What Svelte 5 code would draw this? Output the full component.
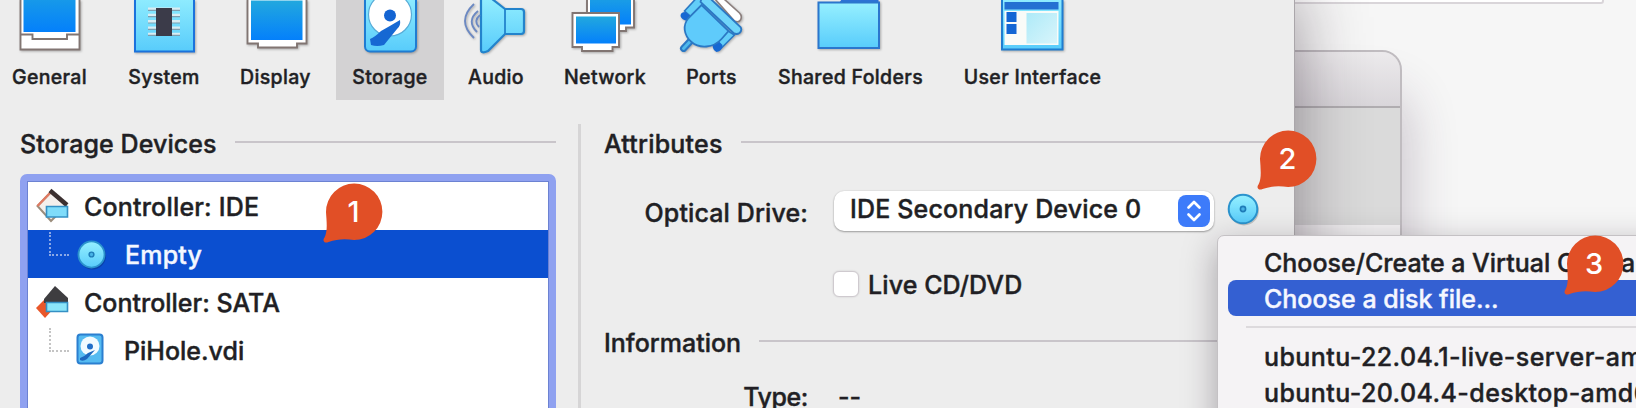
<script>
  const tools = [
    { id: 'general', label: 'General', cx: 49.5, w: 99 },
    { id: 'system', label: 'System', cx: 164, w: 130 },
    { id: 'display', label: 'Display', cx: 275.5, w: 93 },
    { id: 'storage', label: 'Storage', cx: 390, w: 136 },
    { id: 'audio', label: 'Audio', cx: 496, w: 76 },
    { id: 'network', label: 'Network', cx: 605, w: 142 },
    { id: 'ports', label: 'Ports', cx: 711.5, w: 71 },
    { id: 'folders', label: 'Shared Folders', cx: 850.5, w: 207 },
    { id: 'ui', label: 'User Interface', cx: 1032.5, w: 157 }
  ];
  const badges = [
    { n: 1, x: 354, y: 211.5 },
    { n: 2, x: 1288, y: 158.5 },
    { n: 3, x: 1594.5, y: 263.5 }
  ];
</script>

{#snippet disc()}
  <svg class="disc" viewBox="-17 -17 34 34">
    <circle cx="1" cy="1.5" r="15" fill="#000" opacity=".18" />
    <circle r="14.3" fill="url(#aqua)" stroke="#2b93cd" stroke-width="2" />
    <circle r="2.6" fill="#48b4e6" stroke="#1e7cb8" stroke-width="1.6" />
  </svg>
{/snippet}

<svg class="defs" width="0" height="0">
  <defs>
    <linearGradient id="screen" x1="0" y1="0" x2="0" y2="1">
      <stop offset="0" stop-color="#22a8de" /><stop offset="1" stop-color="#0480fb" />
    </linearGradient>
    <linearGradient id="aqua" x1="0" y1="0" x2="0" y2="1">
      <stop offset="0" stop-color="#96f0ff" /><stop offset="1" stop-color="#58ccfb" />
    </linearGradient>
    <linearGradient id="pale" x1="0" y1="0" x2="1" y2="1">
      <stop offset="0" stop-color="#aeeaf8" /><stop offset="1" stop-color="#d8f5fb" />
    </linearGradient>
  </defs>
</svg>

<div class="desktop">
  <div class="sheet"></div>
  <div class="behind">
    <div class="behind-title"></div>
    <div class="behind-body"></div>
    <div class="behind-foot"></div>
  </div>

  <main class="window">
    <nav class="toolbar">
      {#each tools as t}
        <div class="slot" style="width:{t.w}px">
          <div class="tool" class:active={t.id === 'storage'}>
            <svg class="ticon" viewBox="{t.cx - 36} 0 72 60">
              {#if t.id === 'general'}
                <path d="M21 -5H80V49.5H21Z" fill="#fff" stroke="#817572" stroke-width="1.9" />
                <path d="M24 -20H76V32H24Z" fill="url(#screen)" />
                <path d="M21 34.5H33V39H67.5V34.5H80" fill="none" stroke="#817572" stroke-width="1.9" />
              {:else if t.id === 'system'}
                <path d="M135 -8H194V51.5H135Z" fill="url(#aqua)" stroke="#1b72dc" stroke-width="2" />
                <path d="M148 9H180M148 15.3H180M148 21.6H180M148 27.9H180M148 34.2H180" stroke="#d9edf3" stroke-width="3" />
                <path d="M148 10.4H180M148 16.7H180M148 23H180M148 29.3H180M148 35.3H180" stroke="#7d9fb0" stroke-width="1.2" />
                <path d="M156 8H172V36H156Z" fill="#3b3b49" />
              {:else if t.id === 'display'}
                <path d="M247 -5H306V43.5H296.5V47.5H257.5V43.5H247Z" fill="#fff" stroke="#817572" stroke-width="1.9" />
                <path d="M250.5 0.5H302V40H250.5Z" fill="url(#screen)" />
              {:else if t.id === 'storage'}
                <rect x="365" y="-10" width="51" height="61.5" rx="5" fill="url(#aqua)" stroke="#1f7cd2" stroke-width="2" />
                <circle cx="390" cy="14.5" r="21.5" fill="#fff" stroke="#58acd8" stroke-width="1.2" />
                <circle cx="390" cy="15.5" r="6" fill="#1464d2" />
                <path d="M370 39Q375 37 381 31Q390 26 400 20Q401 26 397 29L384 45Q377 47 371 45Z" fill="#1668d3" />
              {:else if t.id === 'audio'}
                <path d="M481 -5H487L505 9H521Q524 9 524 12V31Q524 34 521 34H505L488 51Q481 54 481 50Z" fill="url(#aqua)" stroke="#2383cc" stroke-width="2.2" />
                <path d="M505 9V34" stroke="#2383cc" stroke-width="1.8" />
                <path d="M474 4Q456 21 474 38M478 11Q466 21 477 32M480 15Q473 21 479 27" fill="none" stroke="#6c89c2" stroke-width="1.9" />
              {:else if t.id === 'network'}
                <path d="M587 -5H634V27.5H626V31H606V27.5H587Z" fill="#fff" stroke="#817572" stroke-width="1.9" />
                <path d="M590 -10H631V24.5H590Z" fill="url(#screen)" />
                <path d="M572.5 13H619V47H612.5V51H582V47H572.5Z" fill="#fff" stroke="#817572" stroke-width="1.9" />
                <path d="M576 16.5H616V43.5H576Z" fill="url(#screen)" />
              {:else if t.id === 'ports'}
                <path d="M710 -6H718L739 13Q742 16 740 20Q738 23 734 21Z" fill="#fff" stroke="#8b7e7c" stroke-width="1.6" />
                <path d="M684 11L697 -3L706 3L692 18ZM714 42L726 30L734 35L721 48Z" fill="#62cdf8" stroke="#2b78c4" stroke-width="1.6" />
                <path d="M680 16Q680 12 685 12L691 17L687 21Q681 20 680 16ZM712 45L717 40L722 45Q722 51 716 52Q712 50 712 45Z" fill="#1768d2" />
                <path d="M683 48.5L690 41" stroke="#2b78c4" stroke-width="7" stroke-linecap="round" />
                <path d="M683 48.5L690 41" stroke="#4fb9ec" stroke-width="3" stroke-linecap="round" />
                <path d="M701 5L728 31L721 39C713 48 699 49 691 42C683 35 682 25 688 18Z" fill="#5fcbfb" stroke="#2b78c4" stroke-width="1.8" />
                <path d="M700 2Q701 -4 707 -4L740 27Q742 30 739 33Q736 35 733 33Z" fill="#70d5fa" stroke="#2b78c4" stroke-width="1.8" />
              {:else if t.id === 'folders'}
                <path d="M839 4L845 -5H879V4Z" fill="#2d72d5" />
                <path d="M819 2.5H879.5V48H819Z" fill="url(#aqua)" stroke="#2b76cd" stroke-width="2" />
              {:else}
                <path d="M1001.5 -8H1062V49.5H1001.5Z" fill="url(#aqua)" stroke="#1f7dd0" stroke-width="2" />
                <path d="M1004 11H1058V45H1004Z" fill="#f9fbf8" />
                <path d="M1004 2H1058V9.5H1004Z" fill="#2370d2" />
                <path d="M1006 12H1016V22H1006ZM1006 24H1016V34H1006Z" fill="#1366d4" />
                <path d="M1026 13H1056.5V43.5H1026Z" fill="url(#pale)" />
              {/if}
            </svg>
            <span>{t.label}</span>
          </div>
        </div>
      {/each}
    </nav>

    <div class="panes">
      <section class="left">
        <h2><span>Storage Devices</span><i></i></h2>
        <div class="tree">
          <div class="row">
            <svg class="ctl" viewBox="36 188 34 36">
              <path d="M51 192L66 206L51 221L37.5 206Z" fill="#f4efec" stroke="#9b8d7c" stroke-width="2" />
              <path d="M37.5 206L51 192" stroke="#e07a62" stroke-width="2.4" />
              <path d="M50 190.5L67 205" stroke="#3b3030" stroke-width="4.4" />
              <path d="M46.5 206.5H67.5V217H46.5Z" fill="#7fdcfa" stroke="#3490c4" stroke-width="1.6" />
            </svg>
            <span class="wide">Controller: IDE</span>
          </div>
          <div class="row child selected">
            <b class="branch"></b>{@render disc()}<span class="empty">Empty</span>
          </div>
          <div class="row">
            <svg class="ctl" viewBox="36 284 34 36">
              <path d="M36 308L47 297L56 306L45 318Z" fill="#e9572a" />
              <path d="M44 299L55 286L68 298V303H44Z" fill="#3e3d40" />
              <path d="M46.5 302.5H67.5V311.5H46.5Z" fill="#8be6fa" stroke="#3490c4" stroke-width="1.6" />
            </svg>
            <span>Controller: SATA</span>
          </div>
          <div class="row child">
            <b class="branch"></b>
            <svg class="hdd" viewBox="0 0 28 32">
              <rect x="1.5" y="1.5" width="25" height="29" rx="3" fill="#55bbf1" stroke="#2b7fd0" stroke-width="2" />
              <circle cx="14" cy="13" r="9.5" fill="#f2fbff" />
              <circle cx="14" cy="13.5" r="3" fill="#226fc8" />
              <path d="M4 25Q8 24 12 20L19 17L11 26Q7 29 4 27Z" fill="#1d68bf" />
            </svg>
            <span>PiHole.vdi</span>
          </div>
        </div>
      </section>

      <div class="splitter"></div>

      <section class="right">
        <h2><span class="wide">Attributes</span><i></i></h2>
        <div class="field drive">
          <label for="drive">Optical Drive:</label>
          <button id="drive" class="combo">
            <span>IDE Secondary Device 0</span>
            <svg viewBox="0 0 32 32">
              <rect width="32" height="32" rx="8" fill="#3d7bfa" />
              <path d="M10.5 12.5L16 7L21.5 12.5M10.5 19.5L16 25L21.5 19.5" fill="none" stroke="#fff" stroke-width="2.7" stroke-linecap="round" stroke-linejoin="round" />
            </svg>
          </button>
          {@render disc()}
        </div>
        <div class="live"><em></em><span>Live CD/DVD</span></div>
        <h2 class="info"><span>Information</span><i></i></h2>
        <div class="field type"><label for="type">Type:</label><output id="type">--</output></div>
      </section>
    </div>
  </main>

  <div class="menu">
    <div class="item">Choose/Create a Virtual Optical Disk...</div>
    <div class="item hot">Choose a disk file...</div>
    <hr />
    <div class="item iso">ubuntu-22.04.1-live-server-amd64.iso</div>
    <div class="item iso">ubuntu-20.04.4-desktop-amd64.iso</div>
  </div>

  {#each badges as b}
    <div class="badge" style="left:{b.x - 32}px;top:{b.y - 32}px">
      <svg viewBox="-32 -32 64 64">
        <path d="M-28 0A28.2 28.2 0 1 1 0 28C-9 26.5 -17 27 -25.5 30C-29.5 32 -32 28.5 -29.5 25.5C-26 19 -27.5 9 -28 0Z" fill="#e14f26" />
      </svg>
      <span>{b.n}</span>
    </div>
  {/each}
</div>

<style>
  :global(body) { overflow: hidden; }
  * { box-sizing: border-box; }
  .defs { position: absolute; }
  .desktop { position: relative; width: 1636px; height: 408px; overflow: hidden; background: #f6f6f6; color: #211f24; font: 500 25px/30px Inter, sans-serif; white-space: nowrap; -webkit-text-stroke: .4px currentColor; }
  .sheet { position: absolute; left: 1200px; top: -10px; width: 404px; height: 14px; background: #fff; border: 2px solid #d9d5d9; border-radius: 0 0 3px; }
  .behind { position: absolute; left: 1200px; top: 50px; width: 202px; height: 400px; border: 2px solid #c0bcc0; border-radius: 20px; background: #d4d4d4; overflow: hidden; box-shadow: 0 50px 50px 6px rgba(60, 35, 65, .24); }
  .behind-title { height: 56px; background: linear-gradient(#eceaec, #d9d6da); border-bottom: 2px solid #b0adb0; }
  .behind-body { height: 117px; background: #dadada; }
  .behind-foot { height: 240px; background: #f3f2f3; }
  .window { position: absolute; left: -40px; top: -40px; width: 1334px; height: 500px; padding: 40px 0 0 40px; background: #ededed; box-shadow: 0 0 0 1px #aaa6aa, 0 34px 66px 0 rgba(30, 15, 32, .45); }

  .toolbar { display: flex; height: 100px; }
  .slot { display: flex; justify-content: center; }
  .tool { display: flex; flex-direction: column; align-items: center; height: 100px; font-size: 19.5px; line-height: 24px; letter-spacing: .34px; }
  .tool.active { width: 108px; background: #d3d2d3; }
  .ticon { display: block; width: 72px; height: 60px; margin-bottom: 5px; flex: none; filter: drop-shadow(1px 1.5px 1px rgba(0, 0, 0, .28)); }

  .panes { display: flex; height: 308px; padding-left: 20px; }
  h2 { display: flex; align-items: center; height: 30px; margin: 0; font: inherit; letter-spacing: .06px; }
  h2 i { flex: 1; height: 2px; margin: -4px 0 0 18px; background: #c9c5ca; }
  .wide { letter-spacing: .19px; }
  .left { width: 536px; padding-top: 28.5px; }
  .left h2 { margin-bottom: 15.5px; }
  .tree { height: 300px; border: 7px solid #8fa1f0; border-radius: 7px 7px 0 0; background: #fff; outline: 1px solid #6c82d2; outline-offset: -8px; padding: 1px; }
  .row { display: flex; align-items: center; height: 48px; padding: 2px 0 0 8px; }
  .ctl { width: 34px; height: 36px; margin: -2px 14px 0 0; }
  .child { padding-left: 21px; }
  .branch { align-self: flex-start; width: 20px; height: 24px; border-left: 2px dotted #c4c4c4; border-bottom: 2px dotted #c4c4c4; }
  .selected { background: #0b4fd0; color: #f4f7ff; }
  .selected .branch { border-color: #8aa8e6; }
  .disc { width: 34px; height: 34px; flex: none; }
  .child .disc { width: 31px; height: 31px; margin: -2px 18px 0 7px; }
  .hdd { width: 28px; height: 32px; margin: -4px 20px 0 7px; }
  .empty { letter-spacing: .2px; }
  .splitter { width: 3px; height: 300px; margin: 24px 23px 0 22px; background: #d6d5d6; }

  .right { width: 690px; padding-top: 28.5px; }
  .right h2 { width: 662px; }
  .field { display: flex; align-items: center; }
  .field label { width: 205px; text-align: right; letter-spacing: .12px; padding-right: 1px; }
  .drive { height: 42px; margin-top: 31px; }
  .drive label { padding-top: 4px; }
  .combo { display: flex; align-items: center; justify-content: space-between; width: 380px; height: 40px; margin: 0 10px 0 25px; padding: 0 4px 0 16px; border: 0; border-radius: 10px; background: #fff; box-shadow: 0 1px 2px rgba(0, 0, 0, .32), 0 0 2px rgba(0, 0, 0, .12); color: inherit; font: inherit; letter-spacing: .17px; }
  .combo span { margin-top: -3px; }
  .combo svg { width: 32px; height: 32px; }
  .drive .disc { margin: -3px 0 0 2px; }
  .live { display: flex; align-items: center; height: 30px; margin: 38.5px 0 0 229px; letter-spacing: .1px; }
  .live em { width: 26px; height: 26px; margin: -2px 9px 0 0; border: 1px solid #cfcacf; border-radius: 6px; background: #fff; box-shadow: 0 0 2px rgba(0, 0, 0, .15); }
  .right .info { margin-top: 28px; letter-spacing: 0; }
  .type { height: 30px; margin-top: 24px; }
  .type label { letter-spacing: -.4px; }
  .type output { margin-left: 29px; letter-spacing: 0; }

  .menu { position: absolute; left: 1217px; top: 235px; width: 620px; height: 260px; padding: 8px 10px; background: #f5f3f5; border: 1px solid #c4c1c4; border-radius: 7px; box-shadow: 0 10px 34px rgba(25, 15, 30, .34); }
  .item { height: 36px; padding-left: 36px; line-height: 38px; }
  .hot { border-radius: 8px; background: #3460d2; color: #f5f7ff; }
  .iso { letter-spacing: .42px; }
  .menu hr { height: 2px; margin: 10px 18px; border: 0; background: #dddadd; }

  .badge { position: absolute; width: 64px; height: 64px; display: grid; place-items: center; color: #fff; font-size: 29px; -webkit-text-stroke: 0; }
  .badge svg { position: absolute; inset: 0; width: 64px; height: 64px; }
  .badge span { position: relative; left: -.5px; }
</style>
